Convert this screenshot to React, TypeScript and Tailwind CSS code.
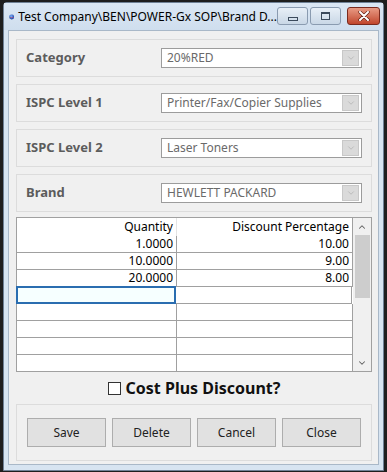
import { ChevronDown, ChevronUp } from 'lucide-react';

const fields = [
  { label: 'Category', value: '20%RED' },
  { label: 'ISPC Level 1', value: 'Printer/Fax/Copier Supplies' },
  { label: 'ISPC Level 2', value: 'Laser Toners' },
  { label: 'Brand', value: 'HEWLETT PACKARD' },
];

const rows = [
  { qty: '1.0000', pct: '10.00' },
  { qty: '10.0000', pct: '9.00' },
  { qty: '20.0000', pct: '8.00' },
  { qty: '', pct: '', selected: true },
  { qty: '', pct: '' },
  { qty: '', pct: '' },
  { qty: '', pct: '' },
];

function AppIcon() {
  return (
    <svg width="16" height="16" viewBox="0 0 16 16">
      <defs>
        <radialGradient id="g" cx="40%" cy="35%" r="65%">
          <stop offset="0%" stopColor="#7fb2ff" />
          <stop offset="100%" stopColor="#1a3f9e" />
        </radialGradient>
      </defs>
      <circle cx="8" cy="8" r="7.5" fill="url(#g)" />
      <text x="8" y="10.5" textAnchor="middle" fontSize="6.5" fontWeight="bold" fill="#e8392f" fontFamily="Liberation Sans, sans-serif">
        GX
      </text>
    </svg>
  );
}

export default function App() {
  return (
    <div className="w-[387px] h-[472px] bg-[#1e1e1e] pl-[3px] pr-[3px] pt-[2px] pb-[1px] overflow-hidden" style={{ fontFamily: '"Noto Sans", "Open Sans", sans-serif' }}>
      <div className="h-full flex flex-col bg-[#d7e4f1] border border-[#6f8196] rounded-t-[4px]">
        {/* Title bar */}
        <div className="h-[27px] flex items-center pl-[5px] pr-[3px] bg-gradient-to-b from-[#dbe7f4] to-[#cfdeee]">
          <AppIcon />
          <span className="ml-[4px] text-[12px] text-black whitespace-nowrap leading-none">Test Company\BEN\POWER-Gx SOP\Brand D...</span>
          <div className="ml-auto flex items-start self-start mt-[4px] gap-[2px]">
            <div className="w-[31px] h-[18px] rounded-[3px] border border-[#8a9bb0] bg-gradient-to-b from-[#e8eff7] to-[#c9d7e6] flex items-center justify-center">
              <div className="w-[10px] h-[4px] border border-[#3b4a5c] mt-[5px]" />
            </div>
            <div className="w-[31px] h-[18px] rounded-[3px] border border-[#8a9bb0] bg-gradient-to-b from-[#e8eff7] to-[#c9d7e6] flex items-center justify-center">
              <div className="w-[9px] h-[8px] border border-[#3b4a5c] border-t-2" />
            </div>
            <div className="ml-[4px] w-[33px] h-[18px] rounded-[3px] border border-[#7a2a1e] bg-gradient-to-b from-[#e89a84] to-[#c0452c] flex items-center justify-center">
              <svg width="12" height="10" viewBox="0 0 12 10">
                <path d="M2 1 L10 9 M10 1 L2 9" stroke="#5a1a10" strokeWidth="3.2" strokeLinecap="round" />
                <path d="M2 1 L10 9 M10 1 L2 9" stroke="#ffffff" strokeWidth="2" strokeLinecap="round" />
              </svg>
            </div>
          </div>
        </div>

        {/* Client area */}
        <div className="flex-1 mx-[4px] mb-[5px] bg-[#f0f0f0] border border-[#a9b8c8] pl-[7px] pr-[6px] pt-[8px] flex flex-col">
          <div className="flex flex-col gap-[7px]">
            {fields.map((f) => (
              <div key={f.label} className="h-[38px] border border-[#dcdcdc] flex items-center pl-[9px]">
                <span className="w-[135px] text-[13px] font-bold text-[#5c5c5c]">{f.label}</span>
                <div className="w-[201px] h-[20px] bg-white border border-[#9c9c9c] flex items-center pl-[5px] pr-[2px]">
                  <span className="text-[12px] text-[#6a6a6a] leading-none">{f.value}</span>
                  <div className="ml-auto w-[17px] h-[16px] bg-[#dadada] border border-[#c8c8c8] flex items-center justify-center">
                    <ChevronDown className="w-[10px] h-[10px] text-[#a8a8a8]" strokeWidth={1.5} />
                  </div>
                </div>
              </div>
            ))}
          </div>

          {/* Grid */}
          <div className="mt-[5px] h-[155px] border border-[#a0a0a0] bg-white flex">
            <div className="w-[336px] flex flex-col">
              <div className="h-[18px] flex text-[12px] text-black leading-none">
                <div className="w-[160px] border-r border-[#e4e4e4] flex items-center justify-end pr-[3px]">Quantity</div>
                <div className="w-[176px] border-r border-[#a0a0a0] flex items-center justify-end pr-[3px]">Discount Percentage</div>
              </div>
              {rows.map((r, i) => (
                <div key={i} className="h-[17px] flex text-[12px] text-black leading-none">
                  <div className={r.selected ? 'w-[160px] border-2 border-[#2a6db0] bg-[#f6ffff] -ml-px -mt-px h-[18px]' : 'w-[160px] border-r border-b border-[#a0a0a0] flex items-center justify-end pr-[3px]'}>
                    {r.qty}
                  </div>
                  <div className="w-[176px] border-r border-b border-[#a0a0a0] flex items-center justify-end pr-[3px]">{r.pct}</div>
                </div>
              ))}
              <div className="h-[16px] flex">
                <div className="w-[160px] border-r border-[#a0a0a0]" />
                <div className="w-[176px] border-r border-[#a0a0a0]" />
              </div>
            </div>
            <div className="flex-1 bg-[#f0f0f0] flex flex-col items-center">
              <div className="h-[17px] w-full flex items-center justify-center">
                <ChevronUp className="w-[10px] h-[10px] text-[#606060]" strokeWidth={2.5} />
              </div>
              <div className="w-[15px] h-[63px] bg-[#cdcdcd]" />
              <div className="flex-1" />
              <div className="h-[17px] w-full flex items-center justify-center">
                <ChevronDown className="w-[10px] h-[10px] text-[#606060]" strokeWidth={2.5} />
              </div>
            </div>
          </div>

          {/* Checkbox */}
          <div className="h-[32px] flex items-center justify-center gap-[5px]">
            <div className="w-[13px] h-[13px] border border-[#333] bg-white" />
            <span className="text-[16px] font-bold text-[#111] leading-none">Cost Plus Discount?</span>
          </div>

          {/* Buttons */}
          <div className="h-[57px] border border-[#dcdcdc] flex items-start gap-[6px] pl-[10px] pt-[13px]">
            {['Save', 'Delete', 'Cancel', 'Close'].map((b) => (
              <button key={b} className="w-[79px] h-[29px] bg-[#e1e1e1] border border-[#adadad] text-[12px] text-[#222]">
                {b}
              </button>
            ))}
          </div>
        </div>
      </div>
    </div>
  );
}
